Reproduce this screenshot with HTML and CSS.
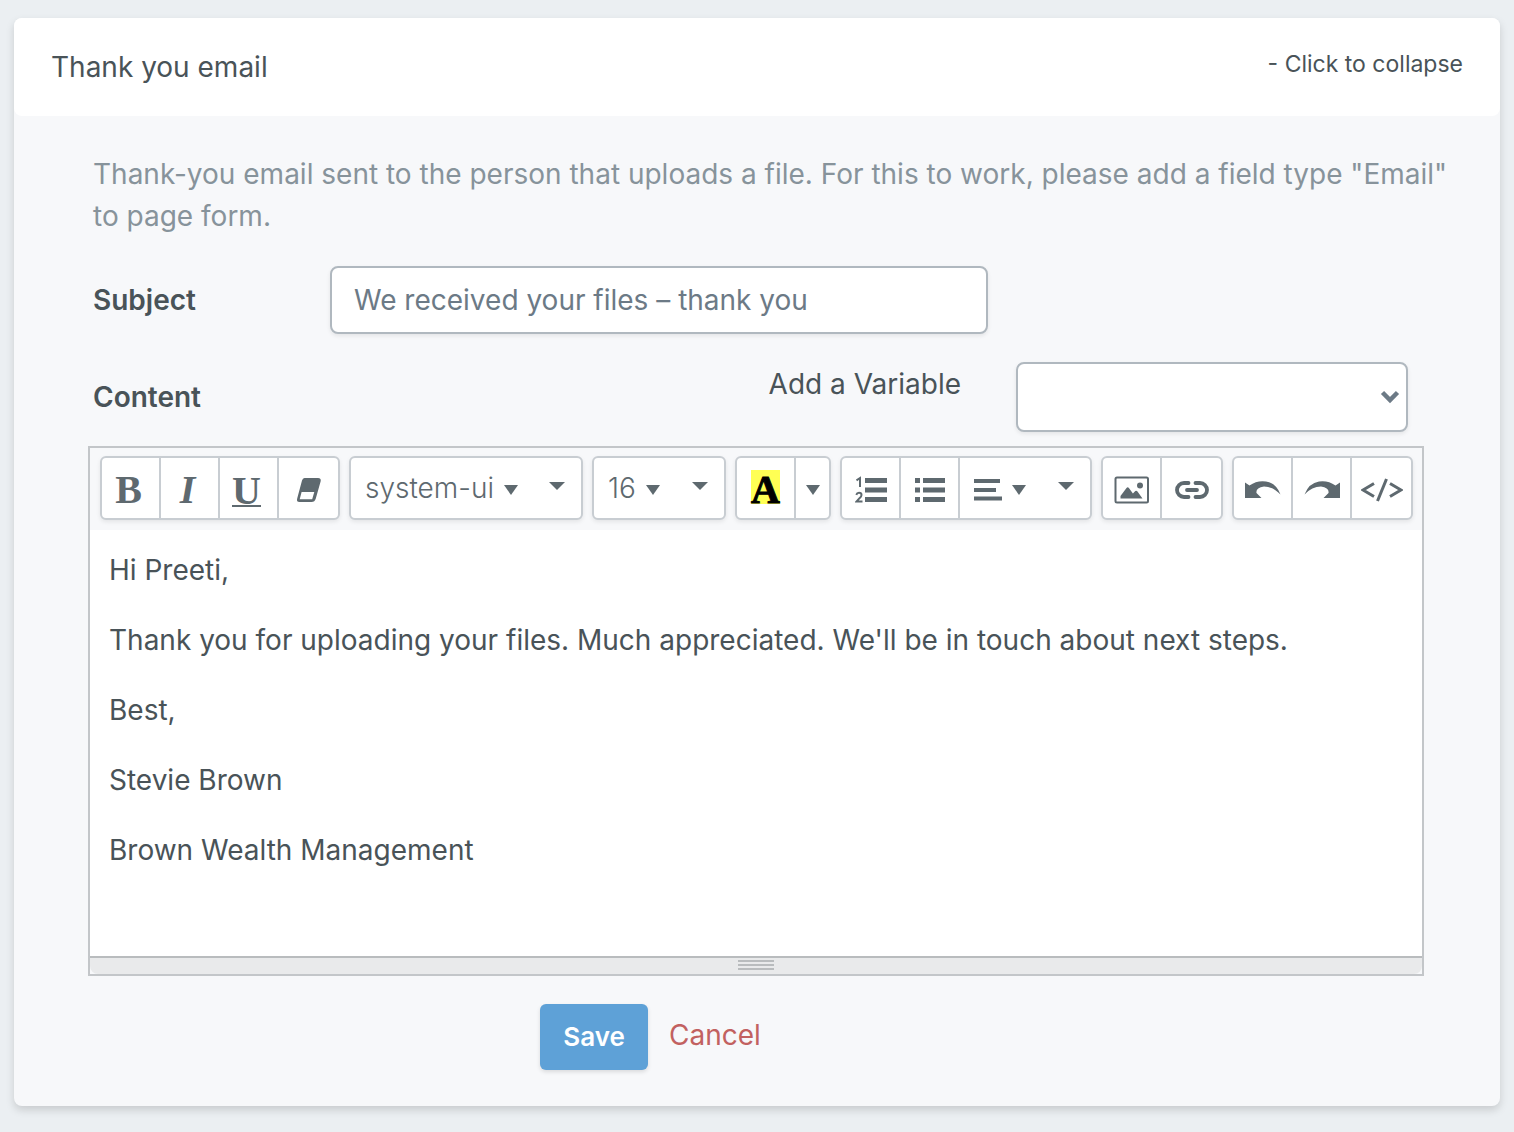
FILE: index.html
```html
<!DOCTYPE html>
<html lang="en">
<head>
<meta charset="utf-8">
<meta name="viewport" content="width=device-width, initial-scale=1">
<title>Thank you email</title>
<link rel="stylesheet" href="styles.css">
</head>
<body>
<main class="card">
  <header class="card-header">
    <h1 class="card-title">Thank you email</h1>
    <button type="button" class="collapse" aria-expanded="true">- Click to collapse</button>
  </header>
  <form class="card-body">
    <p class="description">Thank-you email sent to the person that uploads a file. For this to work, please add a field type "Email" to page form.</p>
    <div class="row subject-row">
      <label class="label" for="subject">Subject</label>
      <input class="field subject" id="subject" type="text" value="We received your files – thank you">
    </div>
    <div class="row content-row">
      <span class="label" id="content-label">Content</span>
      <label class="variable-label" for="variable">Add a Variable</label>
      <div class="select-wrap">
        <select class="field variable" id="variable"><option value=""></option></select>
        <svg class="chevron" width="20" height="14" viewBox="0 0 20 14" aria-hidden="true"><path d="M2.500 2.500l7.500 7.500 7.500-7.500" fill="none" stroke="#6c7a86" stroke-width="4.500"/></svg>
      </div>
    </div>
    <section class="editor">
      <div class="toolbar" role="toolbar" aria-label="Formatting">
        <div class="group">
          <button type="button" class="tool glyph" aria-label="Bold">B</button>
          <button type="button" class="tool glyph italic" aria-label="Italic">I</button>
          <button type="button" class="tool glyph" aria-label="Underline"><span class="underlined">U</span></button>
          <button type="button" class="tool" aria-label="Clear formatting">
            <svg width="26" height="26" viewBox="0 0 26 26"><path fill="currentColor" fill-rule="evenodd" d="M8.500 1H22q3.500 0 2.600 3.500L19.800 21.500Q18.800 25 15.500 25H3.500Q.2 25 1.200 21.500L6 3.500Q6.700 1 8.500 1zM5.600 15L3.700 22.300H16.200L18.300 15z"/></svg>
          </button>
        </div>
        <div class="group">
          <button type="button" class="tool drop font-name"><span>system-ui</span><i class="tri"></i><i class="caret"></i></button>
        </div>
        <div class="group">
          <button type="button" class="tool drop font-size"><span>16</span><i class="tri"></i><i class="caret"></i></button>
        </div>
        <div class="group">
          <button type="button" class="tool" aria-label="Highlight colour"><span class="highlight">A</span></button>
          <button type="button" class="tool narrow" aria-label="More colours"><i class="tri"></i></button>
        </div>
        <div class="group">
          <button type="button" class="tool" aria-label="Ordered list">
            <svg width="32" height="28" viewBox="0 0 32 28" fill="currentColor"><path d="M10 2h22v5H10zM10 11.500h22v5H10zM10 21h22v5H10z"/><path d="M1.500 4.300L5 2v9M1.300 18.800q.7-2 2.700-2 2.500 0 2.500 2.200 0 1.500-2 3.200L1.500 25.500H7.500" fill="none" stroke="currentColor" stroke-width="2"/></svg>
          </button>
          <button type="button" class="tool" aria-label="Unordered list">
            <svg width="30" height="28" viewBox="0 0 30 28" fill="currentColor"><path d="M0 2h5v5H0zM0 11.500h5v5H0zM0 21h5v5H0zM8 2h22v5H8zM8 11.500h22v5H8zM8 21h22v5H8z"/></svg>
          </button>
          <button type="button" class="tool drop align" aria-label="Paragraph">
            <svg width="28" height="22" viewBox="0 0 28 22" fill="currentColor"><path d="M0 0h26v4H0zM0 9h22v4H0zM0 17.500h28v4H0z"/></svg><i class="tri"></i><i class="caret"></i>
          </button>
        </div>
        <div class="group">
          <button type="button" class="tool" aria-label="Picture">
            <svg width="36" height="28" viewBox="0 0 36 28"><rect x="1.500" y="1.500" width="32.500" height="25" rx="1.500" fill="none" stroke="currentColor" stroke-width="2"/><circle cx="26" cy="9.500" r="3" fill="currentColor"/><path fill="currentColor" d="M6.500 22.500V20l6-8q1.200-1.600 2.400 0l4 5.500 2.400-2.500q1.200-.8 2.200.5l5 7z"/></svg>
          </button>
          <button type="button" class="tool" aria-label="Link">
            <svg width="34" height="18" viewBox="0 0 34 18" fill="none" stroke="currentColor" stroke-width="3.800" stroke-linecap="round"><path d="M13.500 2H9A7 7 0 0 0 9 16h4.500M20.500 2h4.500a7 7 0 0 1 0 14H20.500M12 9h10"/></svg>
          </button>
        </div>
        <div class="group">
          <button type="button" class="tool" aria-label="Undo">
            <svg width="36" height="18" viewBox="0 0 36 18"><path id="undo-arrow" fill="currentColor" d="M0 1.500L4.500 4.500Q12-.8 21 .5 31 2 35.500 13.500 28 5.500 19 5.500 10.500 7 11.500 12L16.500 17H0z"/></svg>
          </button>
          <button type="button" class="tool" aria-label="Redo">
            <svg width="36" height="18" viewBox="0 0 36 18"><use href="#undo-arrow" transform="translate(36 0) scale(-1 1)"/></svg>
          </button>
          <button type="button" class="tool" aria-label="Code view">
            <svg width="42" height="24" viewBox="0 0 42 24" fill="none" stroke="currentColor"><path d="M13 5.500L2 12l11 6.500M29 5.500L40 12 29 18.500" stroke-width="3"/><path d="M25.500 1L16.500 23" stroke-width="3"/></svg>
          </button>
        </div>
      </div>
      <div class="editable" contenteditable="true" spellcheck="false" role="textbox" aria-multiline="true" aria-labelledby="content-label">
        <p>Hi Preeti,</p>
        <p>Thank you for uploading your files. Much appreciated. We'll be in touch about next steps.</p>
        <p>Best,</p>
        <p>Stevie Brown</p>
        <p>Brown Wealth Management</p>
      </div>
      <div class="resize-bar"><i></i><i></i><i></i></div>
    </section>
    <div class="actions">
      <button type="submit" class="save">Save</button>
      <a class="cancel" href="#">Cancel</a>
    </div>
  </form>
</main>
</body>
</html>
```

FILE: styles.css
```css
* { box-sizing: border-box; }

body {
  margin: 0;
  padding: 18px 14px 26px;
  background: #ebeff2;
  color: #495358;
  font-family: Inter, "Liberation Sans", sans-serif;
  font-size: 28px;
  line-height: 42px;
}

button, input, select { font: inherit; color: inherit; }

.card {
  background: #f7f8fa;
  border-radius: 8px;
  box-shadow: 0 4px 8px rgba(0, 0, 0, .15);
}

.card-header {
  display: flex;
  justify-content: space-between;
  align-items: flex-start;
  padding: 28px 37px;
  background: #fff;
  border-radius: 8px;
}

.card-title {
  margin: 0;
  font-size: 28px;
  font-weight: 400;
}

.collapse {
  padding: 0;
  border: 0;
  background: none;
  font-size: 23px;
  line-height: 36px;
}

.card-body { padding: 37px 50px 36px 79px; }

.description {
  margin: 0;
  color: #87939b;
}

.row { display: flex; }

.label {
  width: 237px;
  font-weight: 600;
}

.field {
  border: 2px solid #b0b8bf;
  border-radius: 8px;
  background: #fff;
  box-shadow: 0 2px 4px rgba(0, 0, 0, .08);
}

.subject-row {
  align-items: center;
  margin-top: 29px;
}

.subject {
  flex: 0 1 658px;
  min-width: 0;
  height: 68px;
  padding: 0 22px;
  color: #6c7a86;
}

.content-row {
  align-items: center;
  margin: 28px 42px 14px 0;
}

.variable-label {
  margin-left: auto;
  margin-right: 55px;
  padding-bottom: 26px;
}

.select-wrap {
  position: relative;
  width: 392px;
}

.variable {
  display: block;
  width: 100%;
  height: 70px;
  appearance: none;
}

.chevron {
  position: absolute;
  right: 8px;
  top: 28px;
  pointer-events: none;
}

.editor {
  margin: 0 26px 0 -5px;
  border: 2px solid #c3c6c9;
}

.toolbar {
  display: flex;
  flex-wrap: wrap;
  gap: 9px;
  padding: 8px 8px 10px 10px;
  color: #5e696f;
}

.group {
  display: flex;
  border: 2px solid #c8cdd2;
  border-radius: 6px;
  background: #fff;
  box-shadow: 0 2px 4px rgba(0, 0, 0, .08);
}

.tool {
  display: flex;
  align-items: center;
  justify-content: center;
  width: 59px;
  height: 60px;
  padding: 4px 0 0;
  border: 0;
  background: none;
}

.tool:not(:last-child) { border-right: 2px solid #c8cdd2; }

.glyph {
  padding-right: 4px;
  font-family: "Liberation Serif", serif;
  font-size: 40px;
  font-weight: 700;
}

.italic { font-style: italic; }

.underlined {
  height: 34px;
  border-bottom: 2px solid;
  line-height: 36px;
}

.highlight {
  height: 34px;
  margin-bottom: 6px;
  background: #ffff54;
  color: #000;
  font-family: "Liberation Serif", serif;
  font-size: 40px;
  font-weight: 700;
  line-height: 40px;
  -webkit-text-stroke: 1px #000;
}

.drop {
  justify-content: flex-start;
  padding: 4px 14px 0;
  font-weight: 300;
}

.drop span { margin-bottom: 4px; }

.font-name { width: 230px; }
.font-size { width: 130px; }
.align { width: 130px; }
.narrow { width: 33px; }

.tri {
  border: 7px solid transparent;
  border-top: 10px solid;
  border-bottom: 0;
}

.drop .tri {
  margin-left: 10px;
}

.caret {
  margin: 0 2px 8px auto;
  border: 8px solid transparent;
  border-top: 8px solid;
  border-bottom: 0;
}

.editable {
  min-height: 426px;
  padding: 19px 19px 1px;
  background: #fff;
  outline: 0;
}

.editable p { margin: 0 0 28px; }

.resize-bar {
  display: flex;
  flex-direction: column;
  align-items: center;
  gap: 2px;
  height: 18px;
  padding-top: 2px;
  border-top: 2px solid #b9bcbe;
  border-radius: 0 0 8px 8px;
  background: #e9eaeb;
}

.resize-bar i {
  width: 36px;
  height: 2px;
  background: #b9bcbe;
}

.actions {
  display: flex;
  gap: 21px;
  margin: 28px 0 0 447px;
}

.save {
  width: 108px;
  height: 66px;
  border: 0;
  border-radius: 6px;
  background: #5ea1d7;
  box-shadow: 0 2px 4px rgba(0, 0, 0, .12);
  color: #fff;
  font-size: 26px;
  font-weight: 600;
}

.cancel {
  padding-top: 10px;
  color: #c26160;
  text-decoration: none;
}
```
